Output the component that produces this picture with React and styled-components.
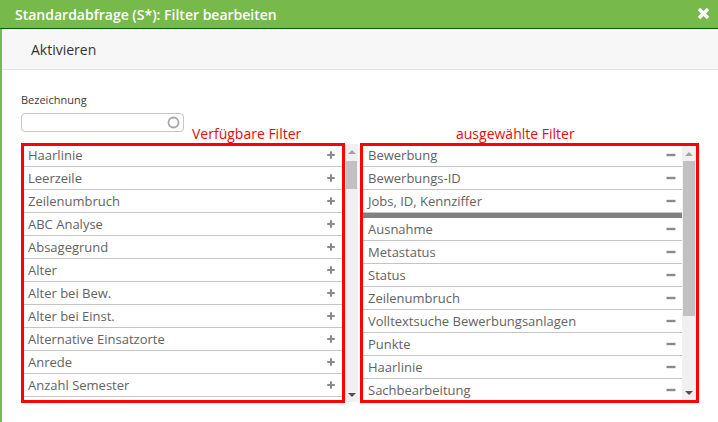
import React from 'react'
import styled, { createGlobalStyle } from 'styled-components'

const Global = createGlobalStyle`
  html, body {
    margin: 0;
    padding: 0;
    background: #fff;
    font-family: 'Open Sans', 'Liberation Sans', sans-serif;
  }
`

const Dialog = styled.div`
  width: 718px;
  height: 422px;
  display: flex;
  flex-direction: column;
  overflow: hidden;
  background: #fff;
`

const Header = styled.div`
  height: 28px;
  flex-shrink: 0;
  background: #77b94b;
  border-bottom: 1px solid #0c5a00;
  display: flex;
  align-items: center;
  justify-content: space-between;
  padding: 0 8px 0 15px;
  color: #fff;
  font-size: 14px;
  font-weight: 600;
`

const Close = styled.svg`
  width: 13px;
  height: 13px;
  margin-top: -1px;
`

const Frame = styled.div`
  flex: 1;
  display: flex;
  flex-direction: column;
  border-left: 2px solid #77b94b;
`

const Toolbar = styled.div`
  height: 40px;
  flex-shrink: 0;
  background: #f7f7f7;
  border-bottom: 1px solid #e3e3e3;
  display: flex;
  align-items: center;
  padding-left: 29px;
  font-size: 14px;
  color: #333;
`

const Body = styled.div`
  padding: 23px 0 0 19px;
  display: grid;
  grid-template-columns: 338px 339px;
  column-gap: 1px;
`

const Field = styled.div`
  display: flex;
  flex-direction: column;
`

const Label = styled.div`
  font-size: 11px;
  line-height: 14px;
  color: #3a3a3a;
  margin-bottom: 6px;
`

const FieldRow = styled.div`
  display: flex;
  align-items: flex-end;
`

const Input = styled.div`
  width: 158px;
  height: 17px;
  border: 1px solid #c6c6c6;
  border-radius: 4px;
  display: flex;
  align-items: center;
  justify-content: flex-end;
  padding-right: 3px;
  margin-bottom: 11px;
`

const Caption = styled.div`
  color: #ea0a0a;
  font-size: 14px;
  line-height: 18px;
  padding-left: ${p => p.$indent}px;
`

const CaptionCell = styled.div`
  display: flex;
  align-items: flex-end;
`

const ListWrap = styled.div`
  display: flex;
  height: 260px;
`

const RedBox = styled.div`
  width: ${p => p.$w}px;
  box-sizing: border-box;
  border: 3px solid #ff0000;
  display: flex;
  overflow: hidden;
`

const List = styled.div`
  flex: 1;
  overflow: hidden;
  display: flex;
  flex-direction: column;
`

const ListInner = styled.div`
  margin-top: -2px;
  display: flex;
  flex-direction: column;
`

const Row = styled.div`
  height: 22px;
  flex-shrink: 0;
  border-bottom: 1px solid #c4c4c4;
  display: flex;
  align-items: center;
  justify-content: space-between;
  padding: 0 ${p => p.$pr}px 0 ${p => p.$pl}px;
  font-size: 13px;
  line-height: 20px;
  color: #636363;
`

const Divider = styled.div`
  height: 5px;
  flex-shrink: 0;
  background: #808080;
`

const Scrollbar = styled.div`
  width: ${p => p.$w}px;
  background: #f0f0f0;
  display: flex;
  flex-direction: column;
  margin: ${p => p.$m};
`

const Arrow = styled.div`
  height: 15px;
  flex-shrink: 0;
  display: flex;
  align-items: center;
  justify-content: center;
  &::after {
    content: '';
    width: 0;
    height: 0;
    border-left: 4px solid transparent;
    border-right: 4px solid transparent;
    ${p => (p.$down ? 'border-top: 4px solid #505050;' : 'border-bottom: 4px solid #a3a3a3;')}
  }
`

const Thumb = styled.div`
  margin: ${p => p.$top}px 1px 0 ${p => p.$left}px;
  height: ${p => p.$h}px;
  background: #c1c1c1;
`

const Spacer = styled.div`
  flex: 1;
`

const Plus = () => (
  <svg width='10' height='10' viewBox='0 0 10 10'>
    <path d='M5 1.2v7.6M1.2 5h7.6' stroke='#8a8a8a' strokeWidth='2' />
  </svg>
)

const Minus = () => (
  <svg width='10' height='10' viewBox='0 0 10 10'>
    <path d='M0.5 5h9' stroke='#8a8a8a' strokeWidth='2.4' />
  </svg>
)

const available = [
  'Haarlinie', 'Leerzeile', 'Zeilenumbruch', 'ABC Analyse', 'Absagegrund', 'Alter',
  'Alter bei Bew.', 'Alter bei Einst.', 'Alternative Einsatzorte', 'Anrede', 'Anzahl Semester'
]

const selectedTop = ['Bewerbung', 'Bewerbungs-ID', 'Jobs, ID, Kennziffer']
const selectedRest = [
  'Ausnahme', 'Metastatus', 'Status', 'Zeilenumbruch', 'Volltextsuche Bewerbungsanlagen',
  'Punkte', 'Haarlinie', 'Sachbearbeitung'
]

const App = () => (
  <Dialog>
    <Global />
    <Header>
      <span>Standardabfrage (S*): Filter bearbeiten</span>
      <Close viewBox='0 0 13 13'>
        <path d='M2 2l9 9M11 2l-9 9' stroke='#fff' strokeWidth='3.4' />
      </Close>
    </Header>
    <Frame>
      <Toolbar>Aktivieren</Toolbar>
      <Body>
        <Field>
          <Label>Bezeichnung</Label>
          <FieldRow>
            <Input>
              <svg width='13' height='13' viewBox='0 0 13 13'>
                <circle cx='6.5' cy='6.5' r='5' fill='none' stroke='#a8a8a8' strokeWidth='1.8' />
              </svg>
            </Input>
            <Caption $indent={8}>Verfügbare Filter</Caption>
          </FieldRow>
        </Field>
        <CaptionCell>
          <Caption $indent={96}>ausgewählte Filter</Caption>
        </CaptionCell>

        <ListWrap>
          <RedBox $w={324}>
            <List>
              <ListInner>
                {available.map(name => (
                  <Row key={name} $pl={4} $pr={6}>
                    {name}
                    <Plus />
                  </Row>
                ))}
              </ListInner>
            </List>
          </RedBox>
          <Scrollbar $w={13} $m='1px 0 1px 0'>
            <Arrow />
            <Thumb $top={2} $left={1} $h={28} />
            <Spacer />
            <Arrow $down />
          </Scrollbar>
        </ListWrap>

        <ListWrap>
          <RedBox $w={339}>
            <List>
              <ListInner>
                {selectedTop.map(name => (
                  <Row key={name} $pl={5} $pr={6}>
                    {name}
                    <Minus />
                  </Row>
                ))}
                <Divider />
                {selectedRest.map(name => (
                  <Row key={name} $pl={5} $pr={6}>
                    {name}
                    <Minus />
                  </Row>
                ))}
              </ListInner>
            </List>
            <Scrollbar $w={14} $m='0'>
              <Arrow />
              <Thumb $top={0} $left={1} $h={155} />
              <Spacer />
              <Arrow $down />
            </Scrollbar>
          </RedBox>
        </ListWrap>
      </Body>
    </Frame>
  </Dialog>
)

export default App
